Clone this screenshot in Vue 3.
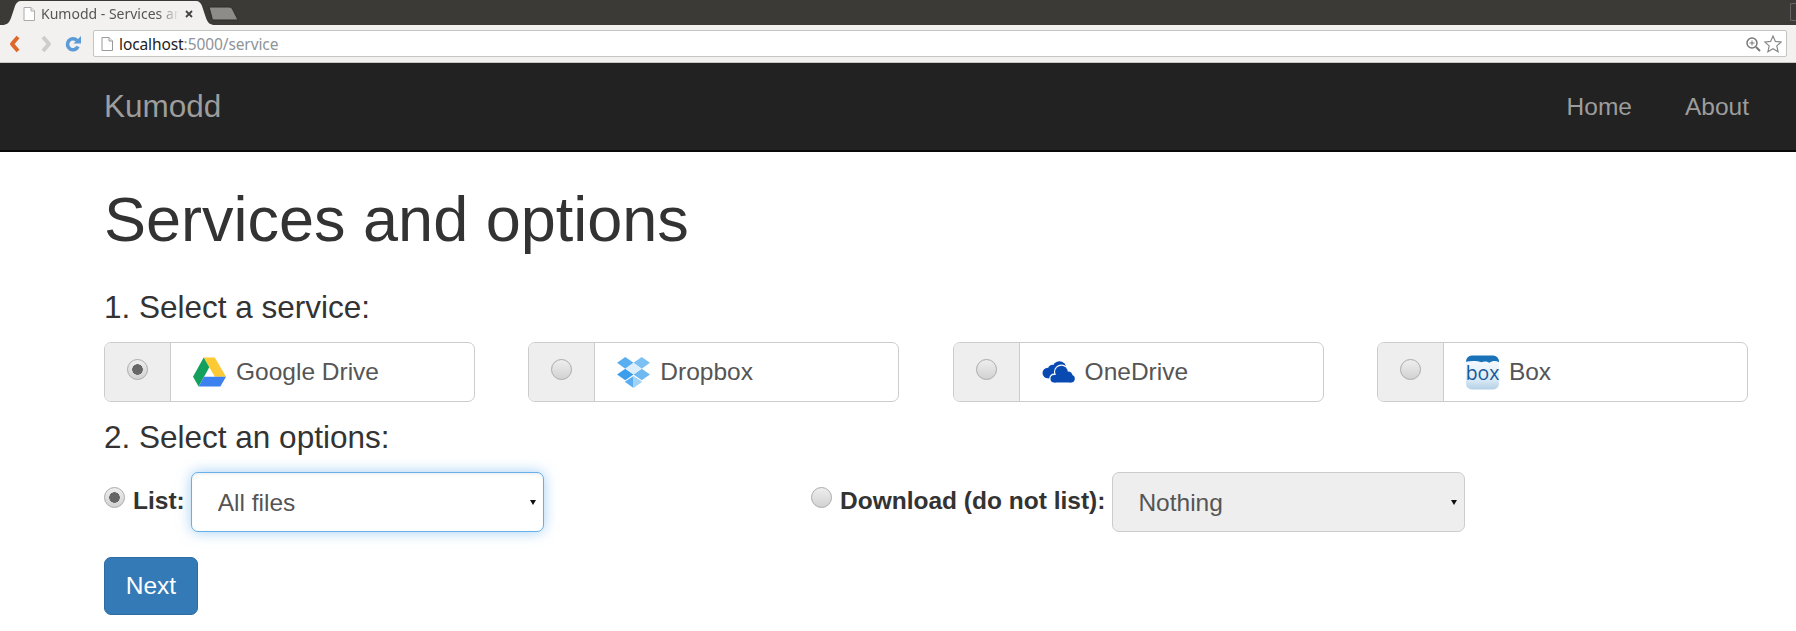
<template>
  <div class="page">
    <!-- browser window -->
    <div class="tabstrip">
      <div class="tab">
        <svg class="tab-shape" viewBox="0 0 213 25" width="213" height="25">
          <path d="M0 25c5 0 7-2 9-7l4-12c1-3 3-5 6-5h175c3 0 5 2 6 5l4 12c2 5 4 7 9 7z" fill="#f2f1f0"/>
        </svg>
        <svg class="page-icon" viewBox="0 0 12 14" width="12" height="14">
          <path d="M1 .5h7l3.500 3.500v9.500h-10.500z" fill="#fff" stroke="#aaa"/>
          <path d="M8 .5v3.500h3.500" fill="#eee" stroke="#aaa"/>
        </svg>
        <span class="tab-title">Kumodd - Services and options</span>
        <svg class="tab-close" viewBox="0 0 8 8" width="8" height="8">
          <path d="M1 1l6 6M7 1l-6 6" stroke="#444" stroke-width="1.800"/>
        </svg>
      </div>
      <svg class="new-tab" viewBox="0 0 31 15" width="31" height="15">
        <path d="M1 1h20c2 0 3 1 4 3l5 10h-24c-1 0-2-1-2-2z" fill="#8d8c88" stroke="#2e2d2a"/>
      </svg>
      <span class="window-edge"></span>
    </div>

    <div class="toolbar">
      <svg class="tool back" viewBox="0 0 16 20" width="16" height="20">
        <path d="M11 3l-6 7 6 7" fill="none" stroke="#e0672a" stroke-width="4" stroke-linejoin="round"/>
      </svg>
      <svg class="tool forward" viewBox="0 0 16 20" width="16" height="20">
        <path d="M5 3l6 7-6 7" fill="none" stroke="#cfcdca" stroke-width="4" stroke-linejoin="round"/>
      </svg>
      <svg class="tool reload" viewBox="0 0 18 18" width="18" height="18">
        <path d="M14 11.500a5.500 5.500 0 1 1-1-6" fill="none" stroke="#5b9bd8" stroke-width="3.600"/>
        <path d="M17 1v7.500h-7.500z" fill="#5b9bd8"/>
      </svg>
      <div class="omnibox">
        <svg viewBox="0 0 12 14" width="12" height="14">
          <path d="M1 .5h7l3.500 3.500v9.500h-10.500z" fill="#fff" stroke="#999"/>
          <path d="M8 .5v3.500h3.500" fill="#eee" stroke="#999"/>
        </svg>
        <span class="url"><b>localhost</b>:5000/service</span>
        <svg class="zoom-icon" viewBox="0 0 16 16" width="16" height="16">
          <circle cx="7" cy="7" r="5" fill="none" stroke="#777" stroke-width="1.500"/>
          <path d="M7 4.500v5M4.500 7h5" stroke="#777"/>
          <path d="M11 11l4 4" stroke="#777" stroke-width="2"/>
        </svg>
        <svg viewBox="0 0 18 18" width="18" height="18">
          <path d="M9 1l2.400 5.400 5.800.6-4.400 3.900 1.300 5.800L9 13.700l-5.100 3 1.300-5.800L.8 7l5.800-.6z" fill="#fff" stroke="#888" stroke-width="1.200"/>
        </svg>
      </div>
    </div>

    <!-- site -->
    <nav class="navbar">
      <a class="brand">Kumodd</a>
      <div class="nav-links">
        <a>Home</a>
        <a>About</a>
      </div>
    </nav>

    <main class="content">
      <h1>Services and options</h1>

      <h4>1. Select a service:</h4>
      <div class="services">
        <div v-for="s in services" :key="s.name" class="service">
          <span class="addon"><input type="radio" name="service" :checked="s.checked" /></span>
          <span class="service-name">
            <svg v-if="s.name === 'Google Drive'" viewBox="0 0 34 30" width="33" height="30">
              <path d="M11 0h11.500L34 20H22.500z" fill="#fdc935"/>
              <path d="M11 0l5.800 10L5.800 30 0 20z" fill="#12a05c"/>
              <path d="M11.500 20H34l-5.800 10H5.800z" fill="#3d80f0"/>
            </svg>
            <svg v-else-if="s.name === 'Dropbox'" viewBox="0 0 34 32" width="33" height="31">
              <path d="M8.500 0L17 6 8.500 12 0 6z" fill="#58aef0"/>
              <path d="M25.500 0L34 6l-8.500 6L17 6z" fill="#7cc0f4"/>
              <path d="M8.500 12L17 18l-8.500 6L0 18z" fill="#3d9eec"/>
              <path d="M25.500 12L34 18l-8.500 6L17 18z" fill="#6fb9f2"/>
              <path d="M17 6l8.500 6L17 18l-8.500-6z" fill="#dcedfc"/>
              <path d="M8 25.500l9-6v12.500z" fill="#58aef0"/>
              <path d="M26 25.500l-9-6v12.500z" fill="#a0d2f7"/>
            </svg>
            <svg v-else-if="s.name === 'OneDrive'" viewBox="0 0 34 22" width="33" height="22">
              <g fill="#094ab2">
                <circle cx="6" cy="12" r="5.500"/>
                <circle cx="11" cy="8.500" r="5"/>
                <circle cx="18" cy="7" r="7"/>
                <rect x="6" y="9" width="16" height="8.500"/>
              </g>
              <g fill="#fff">
                <circle cx="12.500" cy="17.500" r="5"/>
                <circle cx="20" cy="11" r="7.700"/>
                <circle cx="27" cy="15" r="5.500"/>
              </g>
              <g fill="#094ab2">
                <circle cx="12.500" cy="18" r="3.800"/>
                <circle cx="20" cy="11" r="6.500"/>
                <circle cx="27" cy="15" r="4.500"/>
                <circle cx="30" cy="18" r="3.800"/>
                <rect x="12.500" y="14" width="17.500" height="7.800"/>
              </g>
            </svg>
            <svg v-else viewBox="0 0 34 35" width="33" height="35">
              <defs>
                <linearGradient id="boxbg" x1="0" y1="0" x2="0" y2="1">
                  <stop offset="0" stop-color="#fbfdff" />
                  <stop offset="0.7" stop-color="#dcebf6" />
                  <stop offset="1" stop-color="#b4d0e6" />
                </linearGradient>
              </defs>
              <rect width="34" height="35" rx="6" fill="url(#boxbg)"/>
              <path d="M0 7V6a6 6 0 0 1 6-6h22a6 6 0 0 1 6 6v1c-3-2-7-1.500-10 .5-3-2-6-1.500-8-.5-4-1.500-10-2-16-.5z" fill="#1a72b8"/>
              <text x="17" y="25" text-anchor="middle" class="box-word">box</text>
            </svg>
            {{ s.name }}
          </span>
        </div>
      </div>

      <h4 class="second">2. Select an options:</h4>
      <div class="options">
        <div class="option">
          <input type="radio" name="mode" checked />
          <label>List:</label>
          <select class="focused">
            <option>All files</option>
          </select>
        </div>
        <div class="option">
          <input type="radio" name="mode" />
          <label>Download (do not list):</label>
          <select class="off">
            <option>Nothing</option>
          </select>
        </div>
      </div>

      <button class="next">Next</button>
    </main>
  </div>
</template>

<script setup>
const services = [
  { name: 'Google Drive', checked: true },
  { name: 'Dropbox', checked: false },
  { name: 'OneDrive', checked: false },
  { name: 'Box', checked: false }
]
</script>

<style scoped>
.page {
  width: 1796px; height: 631px; overflow: hidden;
  font-family: 'Liberation Sans', Arial, sans-serif;
  color: #333; background: #fff;
}

/* browser */
.tabstrip {
  height: 25px; background: #3c3a36;
  display: flex; align-items: flex-end; position: relative;
}
.tab {
  width: 213px; height: 25px; margin-left: 2px; position: relative;
  display: flex; align-items: center; padding: 2px 22px 0 21px; box-sizing: border-box;
  gap: 6px;
  font-family: 'Noto Sans', sans-serif; font-size: 14px; color: #555;
}
.tab-shape { position: absolute; left: 0; top: 0; }
.page-icon, .tab-close, .tab-title { position: relative; }
.tab-title {
  flex: 1; white-space: nowrap; overflow: hidden;
  -webkit-mask-image: linear-gradient(to right, #000 85%, transparent);
  mask-image: linear-gradient(to right, #000 85%, transparent);
}
.new-tab { margin: 0 0 4px -7px; }
.window-edge {
  position: absolute; right: 0; top: 3px; width: 5px; height: 16px;
  border: 1px solid #666; border-right: 0; border-radius: 2px 0 0 2px;
}

.toolbar {
  height: 38px; background: #f2f1f0; box-sizing: border-box;
  border-bottom: 1px solid #c8c6c2;
  display: flex; align-items: center; padding: 0 9px 0 7px;
}
.back { margin-right: 15px; }
.forward { margin-right: 10px; }
.reload { margin-right: 11px; }
.omnibox {
  flex: 1; height: 27px; background: #fff; box-sizing: border-box;
  border: 1px solid #c4c4c2; border-radius: 2px;
  display: flex; align-items: center; padding: 0 4px 0 7px; gap: 6px;
}
.url {
  flex: 1; font-family: 'Noto Sans', sans-serif; font-size: 15.500px; color: #8f9499;
  letter-spacing: -0.1px;
}
.url b { font-weight: 400; color: #222; }
.zoom-icon { margin-right: -3px; }

/* navbar */
.navbar {
  height: 89px; background: #222; box-sizing: border-box;
  border-bottom: 2px solid #090909;
  display: flex; align-items: center; justify-content: space-between;
  padding: 0 47px 0 104px;
  color: #9d9d9d; font-size: 24.5px;
}
.brand { font-size: 31.5px; }
.nav-links { display: flex; gap: 53px; }

/* page */
.content { padding: 0 49px 0 104px; }
h1 {
  margin: 33px 0 0; font-size: 63px; font-weight: 500; line-height: 69px;
}
h4 {
  margin: 36px 0 0; font-size: 31.5px; font-weight: 500; line-height: 35px; color: #333;
}
.services {
  display: grid; grid-template-columns: repeat(4, 371px); column-gap: 53.3px;
  margin-top: 17px;
}
.service {
  height: 60px; display: flex; box-sizing: border-box;
  border: 1px solid #ccc; border-radius: 7px; overflow: hidden;
  font-size: 24.5px; color: #555;
}
.addon {
  width: 66px; background: #eee; border-right: 1px solid #ccc;
  display: flex; justify-content: center; padding-top: 16px; box-sizing: border-box;
}
.service-name {
  flex: 1; display: flex; align-items: center; gap: 10px; padding-left: 22px;
}
.box-word {
  font-family: 'Open Sans', sans-serif; font-size: 20px; font-weight: 400; fill: #17599b;
}
input[type="radio"] {
  appearance: none; -webkit-appearance: none; flex: none;
  width: 21px; height: 21px; margin: 0; box-sizing: border-box;
  border: 1px solid #aaa; border-radius: 50%;
  background: linear-gradient(#eee, #d2d2d2);
}
input[type="radio"]:checked {
  background: radial-gradient(circle, #666 0 5px, transparent 5.5px), linear-gradient(#eee, #d2d2d2);
}
h4.second { margin-top: 18px; }
.options { display: flex; margin-top: 17px; }
.option {
  width: 707px; display: flex; align-items: flex-start; gap: 8px;
}
.option input[type="radio"] { margin-top: 15px; }
.option label {
  font-size: 24.5px; font-weight: 700; line-height: 35px; margin-top: 11px;
}
select {
  appearance: none; -webkit-appearance: none;
  width: 353px; height: 60px; box-sizing: border-box; margin-left: -2px;
  padding: 0 21px 0 25px; border: 1px solid #ccc; border-radius: 7px;
  font-family: inherit; font-size: 24.5px; color: #555; background-color: #fff;
  background-image: url("data:image/svg+xml,%3Csvg xmlns='http://www.w3.org/2000/svg' width='6' height='5'%3E%3Cpath d='M0 0h6L3 5z' fill='%23111'/%3E%3C/svg%3E");
  background-repeat: no-repeat; background-position: right 7px center;
}
select.focused {
  padding-left: 26px;
  border-color: #66afe9;
  box-shadow: inset 0 2px 2px rgba(0, 0, 0, 0.05), 0 0 14px rgba(102, 175, 233, 0.6);
}
select.off { background-color: #eee; margin-left: -1px; }
.next {
  display: block; width: 94px; height: 58px; margin-top: 25px;
  background: #337ab7; border: 1px solid #2e6da4; border-radius: 7px;
  font-family: inherit; font-size: 24.5px; color: #fff;
}
</style>

<style>
body { background: #fff; }
</style>
